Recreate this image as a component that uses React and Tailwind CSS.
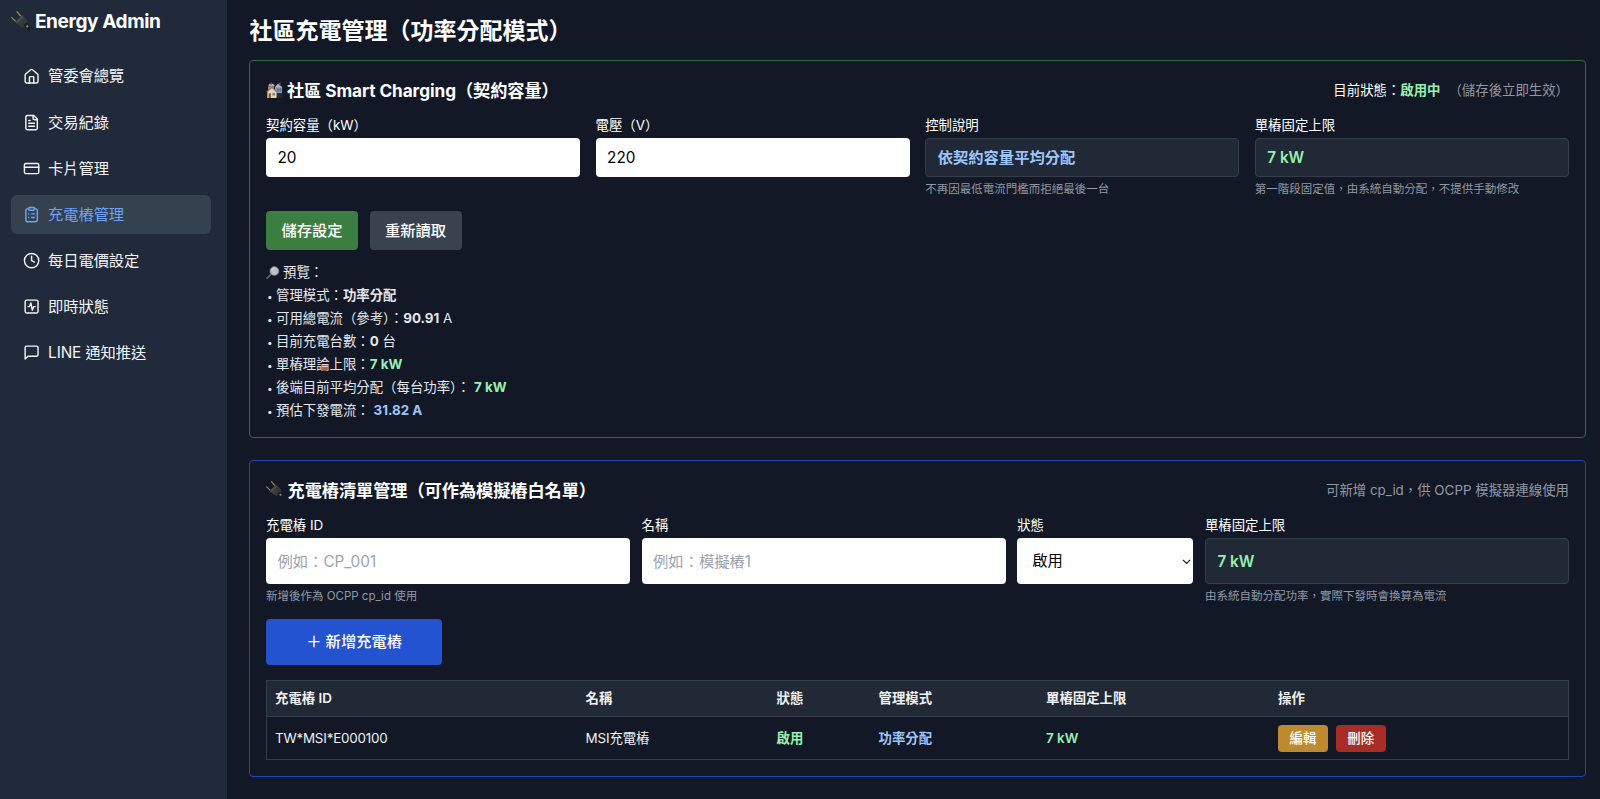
import { useState } from "react";

const NAV_ITEMS = [
  { key: "overview", label: "管委會總覽" },
  { key: "records", label: "交易紀錄" },
  { key: "cards", label: "卡片管理" },
  { key: "chargers", label: "充電樁管理" },
  { key: "pricing", label: "每日電價設定" },
  { key: "live", label: "即時狀態" },
  { key: "line", label: "LINE 通知推送" },
];

const CHARGE_POINTS = [
  { id: "TW*MSI*E000100", name: "MSI充電樁", status: "啟用", mode: "功率分配", limit: "7 kW" },
];

const ICONS = {
  overview: (
    <>
      <path d="M15 21v-8a1 1 0 0 0-1-1h-4a1 1 0 0 0-1 1v8" />
      <path d="M3 10a2 2 0 0 1 .709-1.528l7-5.999a2 2 0 0 1 2.582 0l7 5.999A2 2 0 0 1 21 10v9a2 2 0 0 1-2 2H5a2 2 0 0 1-2-2z" />
    </>
  ),
  records: (
    <>
      <path d="M15 2H6a2 2 0 0 0-2 2v16a2 2 0 0 0 2 2h12a2 2 0 0 0 2-2V7Z" />
      <path d="M14 2v4a2 2 0 0 0 2 2h4M10 9H8M16 13H8M16 17H8" />
    </>
  ),
  cards: (
    <>
      <rect width="20" height="14" x="2" y="5" rx="2" />
      <path d="M2 10h20" />
    </>
  ),
  chargers: (
    <>
      <rect width="8" height="4" x="8" y="2" rx="1" />
      <path d="M16 4h2a2 2 0 0 1 2 2v14a2 2 0 0 1-2 2H6a2 2 0 0 1-2-2V6a2 2 0 0 1 2-2h2M12 11h4M12 16h4M8 11h.01M8 16h.01" />
    </>
  ),
  pricing: (
    <>
      <circle cx="12" cy="12" r="10" />
      <path d="M12 6v6l4 2" />
    </>
  ),
  live: (
    <>
      <rect width="18" height="18" x="3" y="3" rx="2" />
      <path d="M17 12h-2l-2 5-2-10-2 5H7" />
    </>
  ),
  line: <path d="M21 15a2 2 0 0 1-2 2H7l-4 4V5a2 2 0 0 1 2-2h14a2 2 0 0 1 2 2z" />,
};

function NavIcon({ name }) {
  return (
    <svg
      viewBox="0 0 24 24"
      className="h-[17.2px] w-[17.2px] shrink-0"
      fill="none"
      stroke="currentColor"
      strokeWidth="2"
      strokeLinecap="round"
      strokeLinejoin="round"
    >
      {ICONS[name]}
    </svg>
  );
}

function PlugIcon({ className }) {
  return (
    <svg viewBox="0 0 20 20" className={className}>
      <path d="M.7 6.6 5.4 11M6 .8l4.4 5" stroke="#a08545" strokeWidth="1.3" strokeLinecap="round" />
      <path d="M3.6 11.2 11 4l4.8 4.4c1.2 1.2 1.2 2.8.2 4l-2.8 3c-1.2 1.2-2.8 1.2-4 .2z" fill="#39393b" />
      <path d="m4.4 11 6.6-6.4 1.7 1.5-6.6 6.6z" fill="#4d4d4e" />
      <path d="m12.4 14.2 3-2.8 3.4 3.8.7 4.4-4-1.6z" fill="#1b1b1d" />
      <path d="m14.6 15.4 1.7-1.6 1.3 1.7-1.3 1.3z" fill="#86878a" />
    </svg>
  );
}

function HousesIcon() {
  return (
    <svg viewBox="0 0 18 18" className="h-[17px] w-[17px]">
      <path d="M9.5 5h7.5v7H9.5z" fill="#8397ae" />
      <path d="m9.2 5.8 3.6-4.2 4.6 4.2z" fill="#a9b4c3" />
      <path d="M13.8.6h1.6v3h-1.6z" fill="#a23b32" />
      <path d="M2.2 4.5h6V8h-6z" fill="#8b9bb0" />
      <path d="m2 4.6 1.6-2.8h4l2 2.8z" fill="#a9b4c3" />
      <path d="M4.6.6h1.6v2.4H4.6zM2 3.6h1.6v2H2z" fill="#a23b32" />
      <path d="M11.6 7h1.8v3h-1.8zM14.4 7H16v3h-1.6z" fill="#526f90" />
      <path d="M11 12h6.5v5H11z" fill="#272b31" />
      <path d="M1.4 10 6.2 5.6l5 4.6V17H1.4z" fill="#ecd3b0" />
      <path d="m.3 10.4 5.9-5.8 5.8 5.8-.8.6-5-4.4L1.1 11z" fill="#b66952" />
      <path d="M2.8 12h2.4v5H2.8z" fill="#8a4f3c" />
      <path d="M6.8 11.5h2.8v2.8H6.8z" fill="#668baa" />
    </svg>
  );
}

function MagnifierIcon() {
  return (
    <svg viewBox="0 0 14 14" className="h-[13.5px] w-[13.5px]">
      <path d="m1.2 12.6 4-4.2" stroke="#5b5e61" strokeWidth="2" strokeLinecap="round" />
      <circle cx="8.7" cy="5.2" r="4.5" fill="#bcc0c4" stroke="#8b8f93" strokeWidth=".8" />
      <path d="M6 4.4a3 3 0 0 1 2.7-2.2" stroke="#dfe2e4" fill="none" />
    </svg>
  );
}

function Bullet() {
  return <span className="inline-block w-[10px] pl-[1px] text-[10px] leading-none">•</span>;
}

function Field({ label, hint, className = "", children }) {
  return (
    <div className={className}>
      <label className="mb-[2px] block text-[13.4px] leading-[21px]">{label}</label>
      {children}
      {hint && <p className="mt-[5px] text-[11.5px] leading-[15px] text-[#9198a4]">{hint}</p>}
    </div>
  );
}

export default function App() {
  const [active, setActive] = useState("chargers");
  const [capacity, setCapacity] = useState("20");
  const [voltage, setVoltage] = useState("220");

  return (
    <div className="flex h-screen overflow-hidden bg-[#121826] font-['Inter','Noto_Sans_CJK_TC',sans-serif] text-[15.3px] text-white">
      {/* SIDEBAR */}
      <aside className="w-[227px] shrink-0 bg-[#202a3a] px-[11.4px] pt-[7px]">
        <div className="flex h-[28px] items-center gap-[3.5px] text-[19.1px] font-bold">
          <PlugIcon className="h-[20px] w-[20px]" />
          <span className="whitespace-nowrap tracking-[-0.42px]">Energy Admin</span>
        </div>

        <nav className="mt-[22px] w-[199.5px] space-y-[7.8px]">
          {NAV_ITEMS.map((item) => (
            <button
              key={item.key}
              onClick={() => setActive(item.key)}
              className={`flex h-[38.3px] w-full items-center gap-[8px] rounded-md px-[11.5px] ${
                active === item.key ? "bg-[#364150] text-[#6ba3f3]" : "text-gray-100"
              }`}
            >
              <NavIcon name={item.key} />
              <span className="pt-[1.5px] tracking-[-0.1px]">{item.label}</span>
            </button>
          ))}
        </nav>
      </aside>

      {/* CONTENT */}
      <main className="min-w-0 flex-1 pt-[15px] pr-[14px] pl-[22px]">
        <h1 className="mb-[13px] pl-[0.6px] text-[23px] leading-[32px] font-bold">社區充電管理（功率分配模式）</h1>

        {/* SMART CHARGING */}
        <section className="mb-[22px] h-[378px] rounded-[4px] border border-[#2f6b3b] p-[16px]">
          <div className="mb-[11px] flex h-[27px] items-center justify-between">
            <h2 className="flex items-center gap-[4px] text-[17.2px] font-bold">
              <HousesIcon />
              <span className="tracking-[-0.07px]">社區 Smart Charging（契約容量）</span>
            </h2>
            <div className="text-[13.4px]">
              目前狀態：<span className="font-bold text-[#98efae]">啟用中</span>
              <span className="ml-[8px] text-[#9198a4]">（儲存後立即生效）</span>
            </div>
          </div>

          <div className="grid grid-cols-4 gap-[15.3px]">
            <Field label="契約容量（kW）">
              <input
                value={capacity}
                onChange={(e) => setCapacity(e.target.value)}
                className="block h-[38.7px] w-full rounded-[4px] bg-white px-[11.5px] pt-[1px] text-black outline-none"
              />
            </Field>
            <Field label="電壓（V）">
              <input
                value={voltage}
                onChange={(e) => setVoltage(e.target.value)}
                className="block h-[38.7px] w-full rounded-[4px] bg-white px-[11.5px] pt-[1px] text-black outline-none"
              />
            </Field>
            <Field label="控制說明" hint="不再因最低電流門檻而拒絕最後一台">
              <div className="flex h-[38.7px] items-center rounded-[4px] border border-[#353d4a] bg-[#212936] px-[11.5px] pt-[2px] font-bold text-[#9dc5fa]">
                依契約容量平均分配
              </div>
            </Field>
            <Field label="單樁固定上限" hint="第一階段固定值，由系統自動分配，不提供手動修改">
              <div className="flex h-[38.7px] items-center rounded-[4px] border border-[#353d4a] bg-[#212936] px-[11.5px] pt-[2px] font-semibold text-[#98efae]">
                7 kW
              </div>
            </Field>
          </div>

          <div className="mt-[14.5px] flex gap-[11.5px]">
            <button className="h-[38.7px] w-[92px] rounded-[4px] bg-[#3b7e41] pt-[1px] font-medium">儲存設定</button>
            <button className="h-[38.7px] w-[92px] rounded-[4px] bg-[#3a414f] pt-[1px] font-medium">重新讀取</button>
          </div>

          <div className="mt-[13.5px] space-y-[3.9px] text-[13.4px] leading-[19px] text-[#e4e6ea]">
            <div className="flex items-center gap-[3.5px]">
              <MagnifierIcon />
              預覽：
            </div>
            <div><Bullet />管理模式：<b>功率分配</b></div>
            <div><Bullet />可用總電流（參考）：<b>90.91</b> A</div>
            <div><Bullet />目前充電台數：<b>0</b> 台</div>
            <div><Bullet />單樁理論上限：<b className="text-[#98efae]">7 kW</b></div>
            <div><Bullet />後端目前平均分配（每台功率）： <b className="text-[#98efae]">7 kW</b></div>
            <div><Bullet />預估下發電流： <b className="text-[#9dc5fa]">31.82 A</b></div>
          </div>
        </section>

        {/* CHARGE POINT LIST */}
        <section className="h-[317px] rounded-[4px] border border-[#2047b0] p-[16px]">
          <div className="mb-[11px] flex h-[27px] items-center justify-between">
            <h2 className="flex items-center gap-[3.5px] text-[17.2px] font-bold">
              <PlugIcon className="h-[18px] w-[18px]" />
              <span className="tracking-[-0.05px]">充電樁清單管理（可作為模擬樁白名單）</span>
            </h2>
            <div className="text-[13.4px] text-[#9198a4]">可新增 cp_id，供 OCPP 模擬器連線使用</div>
          </div>

          <div className="grid grid-cols-7 gap-x-[11.5px] gap-y-[15px]">
            <Field label="充電樁 ID" hint="新增後作為 OCPP cp_id 使用" className="col-span-2">
              <input
                placeholder="例如：CP_001"
                className="block h-[46px] w-full rounded-[4px] bg-white px-[11.5px] text-black outline-none placeholder:text-[#9ca3af]"
              />
            </Field>
            <Field label="名稱" className="col-span-2">
              <input
                placeholder="例如：模擬樁1"
                className="block h-[46px] w-full rounded-[4px] bg-white px-[11.5px] text-black outline-none placeholder:text-[#9ca3af]"
              />
            </Field>
            <Field label="狀態">
              <div className="relative">
                <select className="block h-[46px] w-full appearance-none rounded-[4px] bg-white px-[15px] pt-[1px] text-black outline-none">
                  <option>啟用</option>
                  <option>停用</option>
                </select>
                <svg viewBox="0 0 10 6" className="pointer-events-none absolute top-[21px] right-[2.5px] h-[5.5px] w-[9px]">
                  <path d="m1 .8 4 4 4-4" fill="none" stroke="#111" strokeWidth="1.2" />
                </svg>
              </div>
            </Field>
            <Field label="單樁固定上限" hint="由系統自動分配功率，實際下發時會換算為電流" className="col-span-2">
              <div className="flex h-[46px] items-center rounded-[4px] border border-[#353d4a] bg-[#212936] px-[11.5px] pt-[2px] font-semibold text-[#98efae]">
                7 kW
              </div>
            </Field>
            <button className="h-[46px] rounded-[4px] bg-[#2453d0] font-medium">＋ 新增充電樁</button>
          </div>

          <table className="mt-[15px] w-full table-fixed border-collapse border border-[#353d4a] text-left text-[13.4px] text-[#f0f1f3]">
            <colgroup>
              <col className="w-[311px]" />
              <col className="w-[191px]" />
              <col className="w-[102px]" />
              <col className="w-[167.5px]" />
              <col className="w-[232px]" />
              <col />
            </colgroup>
            <thead>
              <tr className="h-[36px] bg-[#212936]">
                <th className="px-[8px] font-semibold">充電樁 ID</th>
                <th className="px-[8px] font-semibold">名稱</th>
                <th className="px-[8px] font-semibold">狀態</th>
                <th className="px-[8px] font-semibold">管理模式</th>
                <th className="px-[8px] font-semibold">單樁固定上限</th>
                <th className="px-[8px] font-semibold">操作</th>
              </tr>
            </thead>
            <tbody>
              {CHARGE_POINTS.map((cp) => (
                <tr key={cp.id} className="h-[43px] border-t border-[#353d4a]">
                  <td className="px-[8px] tracking-[-0.2px]">{cp.id}</td>
                  <td className="px-[8px] tracking-[-0.1px]">{cp.name}</td>
                  <td className="px-[8px] font-semibold text-[#98efae]">{cp.status}</td>
                  <td className="px-[8px] font-semibold text-[#9dc5fa]">{cp.mode}</td>
                  <td className="px-[8px] font-semibold text-[#98efae]">{cp.limit}</td>
                  <td className="px-[8px]">
                    <div className="flex gap-[7.7px]">
                      <button className="h-[27px] w-[50px] rounded-[4px] bg-[#bf8a2f] font-medium text-white">編輯</button>
                      <button className="h-[27px] w-[50px] rounded-[4px] bg-[#a92d27] font-medium text-white">刪除</button>
                    </div>
                  </td>
                </tr>
              ))}
            </tbody>
          </table>
        </section>
      </main>
    </div>
  );
}
